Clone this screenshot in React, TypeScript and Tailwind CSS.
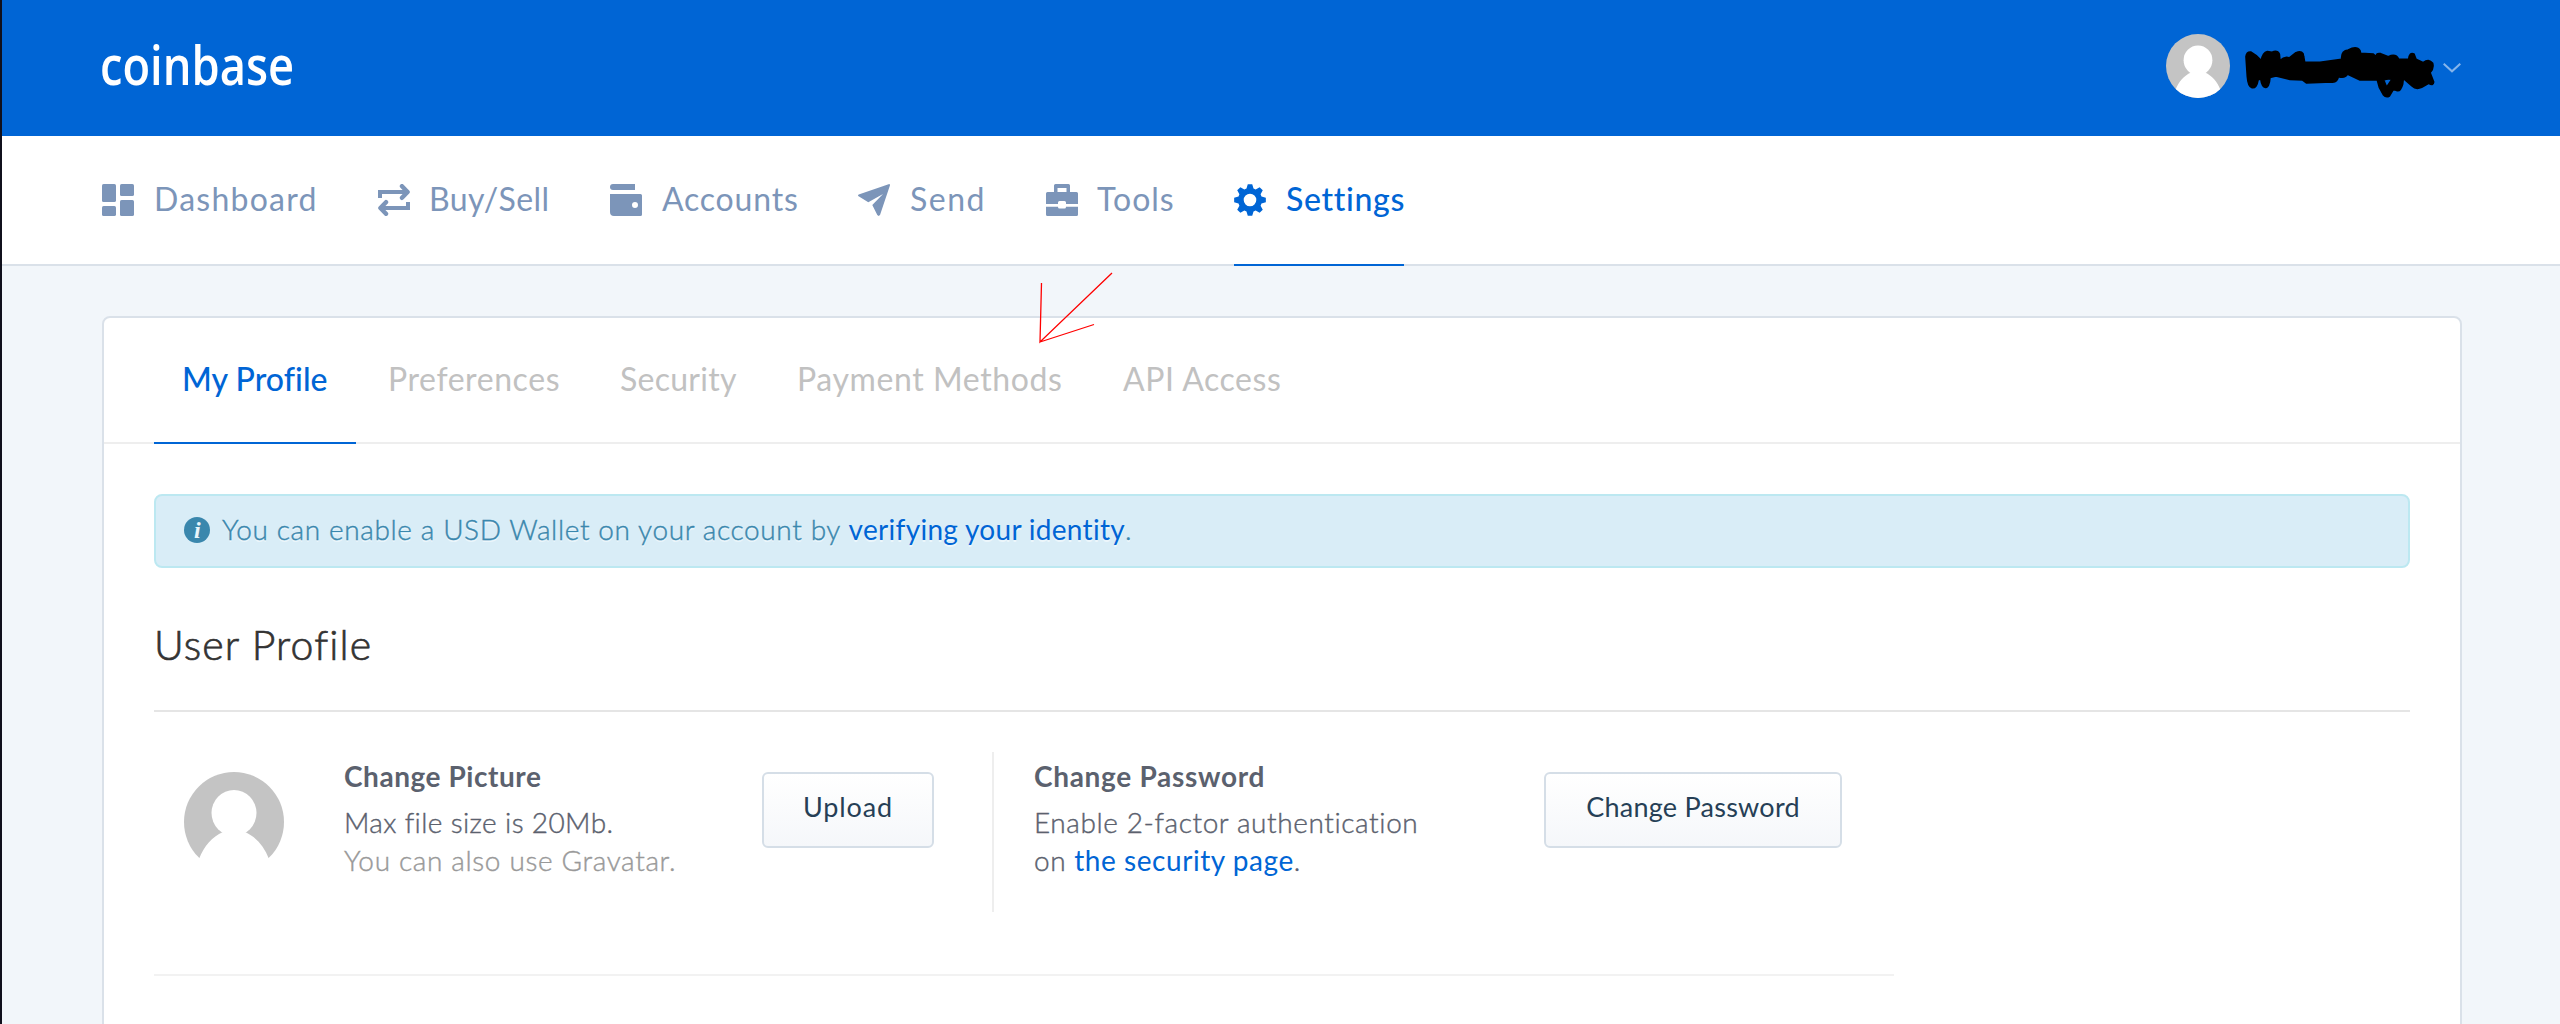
import React from "react";

function Avatar({ className, bleed = false }: { className: string; bleed?: boolean }) {
  return (
    <svg viewBox="0 0 100 100" className={className}>
      <clipPath id="avatar-clip">
        <circle cx="50" cy="50" r="50" />
      </clipPath>
      <circle cx="50" cy="50" r="50" fill="#c4c4c4" />
      <g clipPath={bleed ? undefined : "url(#avatar-clip)"} fill="#fff">
        <ellipse cx="50" cy="41" rx="22.5" ry="23" />
        <path d="M36 52H64L61 60C72 65 80 74 85 87V101H15V87C20 74 28 65 39 60Z" />
      </g>
    </svg>
  );
}

const icon = "h-8 w-8 shrink-0 fill-current";

function DashboardIcon() {
  return (
    <svg viewBox="0 0 32 32" className={icon}>
      <rect width="14" height="18" rx="1.6" />
      <rect x="18" width="14" height="12" rx="1.6" />
      <rect y="22" width="14" height="10" rx="1.6" />
      <rect x="18" y="16" width="14" height="16" rx="1.6" />
    </svg>
  );
}

function SwapIcon() {
  return (
    <svg viewBox="0 0 32 32" className="h-8 w-8 shrink-0 fill-none stroke-current" strokeWidth="4">
      <path d="M2 14V8H29M30 18V24H3" />
      <path d="M24 2.2L29.6 8L24 13.8M8 18.2L2.4 24L8 29.8" strokeLinecap="round" strokeLinejoin="round" strokeWidth="4.4" />
    </svg>
  );
}

function WalletIcon() {
  return (
    <svg viewBox="0 0 32 32" className={icon} fillRule="evenodd">
      <path d="M3 0H25V6H3A3 3 0 0 1 3 0Z" />
      <path d="M0 10H30.5A1.5 1.5 0 0 1 32 11.500V30.500A1.500 1.500 0 0 1 30.500 32H4A4 4 0 0 1 0 28ZM25 18A3 3 0 1 0 25 24A3 3 0 1 0 25 18Z" />
    </svg>
  );
}

function SendIcon() {
  return (
    <svg viewBox="0 0 32 32" className={icon}>
      <path d="M32 1.200Q32 -.2 30.600 .2L.7 10.600Q-.6 11.300 .6 12.200L10.300 18.300L25 10L14.300 21L19.300 31.100Q20.600 32.700 22 31.100Z" />
    </svg>
  );
}

function ToolsIcon() {
  return (
    <svg viewBox="0 0 32 32" className={icon} fillRule="evenodd">
      <path d="M8 8V1.500A1.500 1.500 0 0 1 9.500 0H22.500A1.500 1.500 0 0 1 24 1.500V8H30.500A1.500 1.500 0 0 1 32 9.500V20H20V18.500A1.500 1.500 0 0 0 18.500 17H13.500A1.500 1.500 0 0 0 12 18.500V20H0V9.500A1.500 1.500 0 0 1 1.500 8ZM11.500 4V8H20.500V4Z" />
      <path d="M0 22.700H12V23A1.500 1.500 0 0 0 13.500 24.500H18.500A1.500 1.500 0 0 0 20 23V22.700H32V30.500A1.500 1.500 0 0 1 30.500 32H1.500A1.500 1.500 0 0 1 0 30.500Z" />
    </svg>
  );
}

// Eight trapezoid teeth around a ring.
const gearPoints = Array.from({ length: 8 }, (_, tooth) =>
  [
    [-17, 12],
    [-8, 16],
    [8, 16],
    [17, 12],
  ].map(([offset, radius]) => {
    const angle = ((tooth * 45 + offset) * Math.PI) / 180;
    return `${(16 + radius * Math.cos(angle)).toFixed(2)} ${(16 + radius * Math.sin(angle)).toFixed(2)}`;
  }),
).flat();

function GearIcon() {
  return (
    <svg viewBox="0 0 32 32" className={icon} fillRule="evenodd">
      <path d={`M${gearPoints.join("L")}ZM16 9.700A6.300 6.300 0 1 0 16 22.300A6.300 6.300 0 1 0 16 9.700Z`} />
    </svg>
  );
}

const navItems = [
  { label: "Dashboard", Icon: DashboardIcon, box: "w-[276px]", text: "tracking-[1.25px]" },
  { label: "Buy/Sell", Icon: SwapIcon, box: "w-[232px]", text: "-ml-px tracking-[0.4px]" },
  { label: "Accounts", Icon: WalletIcon, box: "w-[248px]", text: "tracking-[0.8px]" },
  { label: "Send", Icon: SendIcon, box: "w-[188px]", text: "tracking-[1.5px]" },
  { label: "Tools", Icon: ToolsIcon, box: "w-[188px]", text: "-ml-px tracking-[1px]" },
];

const tabs = [
  { label: "Preferences", box: "w-[232px] tracking-[0.58px]" },
  { label: "Security", box: "w-[177px] tracking-[0.27px]" },
  { label: "Payment Methods", box: "w-[326px] tracking-[0.6px]" },
  { label: "API Access", box: "tracking-[0.55px]" },
];

// A light face with a hairline stroke gives a weight between light and regular.
const book = "font-light [-webkit-text-stroke:0.4px]";

const button =
  "mt-[60px] flex h-[76px] shrink-0 items-start justify-center rounded-[6px] border-2 border-[#d5dee7] bg-gradient-to-b from-white to-[#f5f7fa] text-[27px] leading-[66px] text-[#263f56]";

function Header() {
  return (
    <header className="flex h-[136px] shrink-0 items-start justify-between bg-[#0065d5] pr-[99px] pl-[98px]">
      <svg viewBox="0 0 200 60" className="mt-[36px] h-[60px] w-[200px] overflow-visible">
        <text
          x="0"
          y="48.500"
          textLength="194"
          lengthAdjust="spacingAndGlyphs"
          className="fill-white font-['Open_Sans',sans-serif] text-[55px] font-semibold"
        >
          coinbase
        </text>
      </svg>
      <div className="flex pt-[34px]">
        <Avatar className="h-16 w-16" />
        <svg viewBox="270 102 639 192" className="h-16 w-[213px] overflow-visible">
          <path
            fillRule="evenodd"
            stroke="#000"
            strokeWidth="5"
            strokeLinejoin="round"
            d="M318 170Q320 155 332 156L350 168L364 182Q368 158 382 155L396 157Q412 150 418 162L420 182Q434 168 448 174L468 158Q490 150 491 170L494 187H540L605 178Q603 152 625 150Q650 136 660 152L662 160L700 162L710 172Q706 158 722 161L745 170Q768 160 776 178L806 178Q808 156 822 162L828 178L850 188Q866 174 878 190Q882 206 870 218L881 246Q880 258 866 250L845 262Q828 270 816 258L790 235L788 252Q782 274 772 272L760 268L748 288Q738 294 730 284L718 262L712 240H660L622 222Q616 236 595 230Q592 248 575 246L500 249L488 240L450 238L408 228L390 232Q388 262 376 262Q366 262 362 236L354 240Q350 266 336 263Q324 260 322 230ZM731 240L740 262L756 238Q744 234 731 240Z"
          />
        </svg>
        <svg viewBox="0 0 18 9" className="mt-[29px] h-[9px] w-[18px] overflow-visible fill-none stroke-[#86b5eb]" strokeWidth="2">
          <path d="M.7 .7L9 8.300L17.300 .7" />
        </svg>
      </div>
    </header>
  );
}

function Nav() {
  return (
    <nav className="flex h-[130px] shrink-0 border-b-2 border-[#dae1e9] bg-white pl-[100px] text-[32px] leading-[126px] text-[#7c95b9]">
      {navItems.map(({ label, Icon, box, text }) => (
        <a key={label} className={`flex h-32 items-center gap-5 whitespace-nowrap ${box}`}>
          <Icon />
          <span className={`h-32 ${text}`}>{label}</span>
        </a>
      ))}
      <a className="flex h-[130px] w-[170px] gap-5 border-b-2 border-[#0065d5] font-medium whitespace-nowrap text-[#0065d5]">
        <span className="flex h-32 items-center">
          <GearIcon />
        </span>
        <span className="tracking-[0.67px]">Settings</span>
      </a>
    </nav>
  );
}

function ProfileRow() {
  return (
    <div className="flex h-[264px] w-[1740px] border-b-2 border-[#f2f2f2] text-[28px] leading-[38px] whitespace-nowrap text-[#5b616e]">
      <Avatar bleed className="mt-[60px] ml-[30px] h-[100px] w-[100px] shrink-0" />
      <div className="ml-[60px] w-[418px] shrink-0 pt-[45px]">
        <h3 className="mb-2 font-bold tracking-[0.55px]">Change Picture</h3>
        <p className={`tracking-[0.37px] ${book}`}>Max file size is 20Mb.</p>
        <p className={`tracking-[0.65px] text-[#999] ${book}`}>You can also use Gravatar.</p>
      </div>
      <button className={`w-[172px] tracking-[0.9px] ${button}`}>Upload</button>
      <div className="mt-10 ml-[58px] h-40 w-0.5 shrink-0 bg-[#eee]" />
      <div className="ml-10 w-[510px] shrink-0 pt-[45px]">
        <h3 className="mb-2 font-bold tracking-[0.7px]">Change Password</h3>
        <p className={`tracking-[0.6px] ${book}`}>Enable 2-factor authentication</p>
        <p className={`tracking-[0.55px] ${book}`}>
          on <a className="font-normal text-[#0065d5] [-webkit-text-stroke:0px]">the security page</a>.
        </p>
      </div>
      <button className={`w-[298px] tracking-[0.25px] ${button}`}>Change Password</button>
    </div>
  );
}

export default function App() {
  return (
    <div className="relative flex h-[1024px] w-[2560px] overflow-hidden bg-[#f2f6fa] font-['Lato',sans-serif]">
      <div className="w-0.5 shrink-0 bg-[#10101c]" />
      <div className="flex h-[1024px] flex-1 flex-col overflow-hidden">
        <Header />
        <Nav />
        <main className="mt-[50px] ml-[100px] h-[760px] w-[2360px] shrink-0 rounded-[8px] border-2 border-[#dae1e9] bg-white">
          <div className="flex h-[126px] border-b-2 border-[#eee] pl-[50px] text-[32px] leading-[121px] whitespace-nowrap text-[#c1c1c1]">
            <a className="h-[126px] w-[202px] border-b-2 border-[#0065d5] pl-7 font-medium tracking-[0.05px] text-[#0065d5]">
              My Profile
            </a>
            {tabs.map(({ label, box }) => (
              <a key={label} className={`pl-8 ${box}`}>
                {label}
              </a>
            ))}
          </div>
          <div className="px-[50px] pt-[50px]">
            <div className="flex h-[74px] items-start rounded-[8px] border-2 border-[#bce8f1] bg-[#d9edf7] pl-7 text-[28px] leading-[67px] text-[#3a87ad] [text-shadow:0_2px_0_rgba(255,255,255,0.5)]">
              <svg viewBox="0 0 26 26" className="mt-[21px] mr-3 h-[26px] w-[26px]">
                <circle cx="13" cy="13" r="13" fill="#3a87ad" />
                <text
                  x="13.300"
                  y="20.500"
                  textAnchor="middle"
                  className="fill-[#e9f5fb] font-['Liberation_Serif',serif] text-[24px] leading-none font-bold italic [text-shadow:none]"
                >
                  i
                </text>
              </svg>
              <p className={`tracking-[0.62px] whitespace-nowrap ${book}`}>
                You can enable a USD Wallet on your account by{" "}
                <a className="font-normal tracking-[0.3px] text-[#0065d5] [-webkit-text-stroke:0px]">
                  verifying your identity
                </a>
                .
              </p>
            </div>
            <h2 className="h-[144px] border-b-2 border-[#e5e5e5] pt-[53px] text-[41px] leading-[48px] font-light tracking-[1.1px] text-[#333] [-webkit-text-stroke:0.7px]">
              User Profile
            </h2>
            <ProfileRow />
          </div>
        </main>
      </div>
      <svg viewBox="0 0 80 80" className="absolute top-[268px] left-[1036px] h-20 w-20 fill-none stroke-[#ff0000]" strokeWidth="1.3">
        <path d="M76 5L4 74L5.500 15M4 74L58 56.500" />
      </svg>
    </div>
  );
}
